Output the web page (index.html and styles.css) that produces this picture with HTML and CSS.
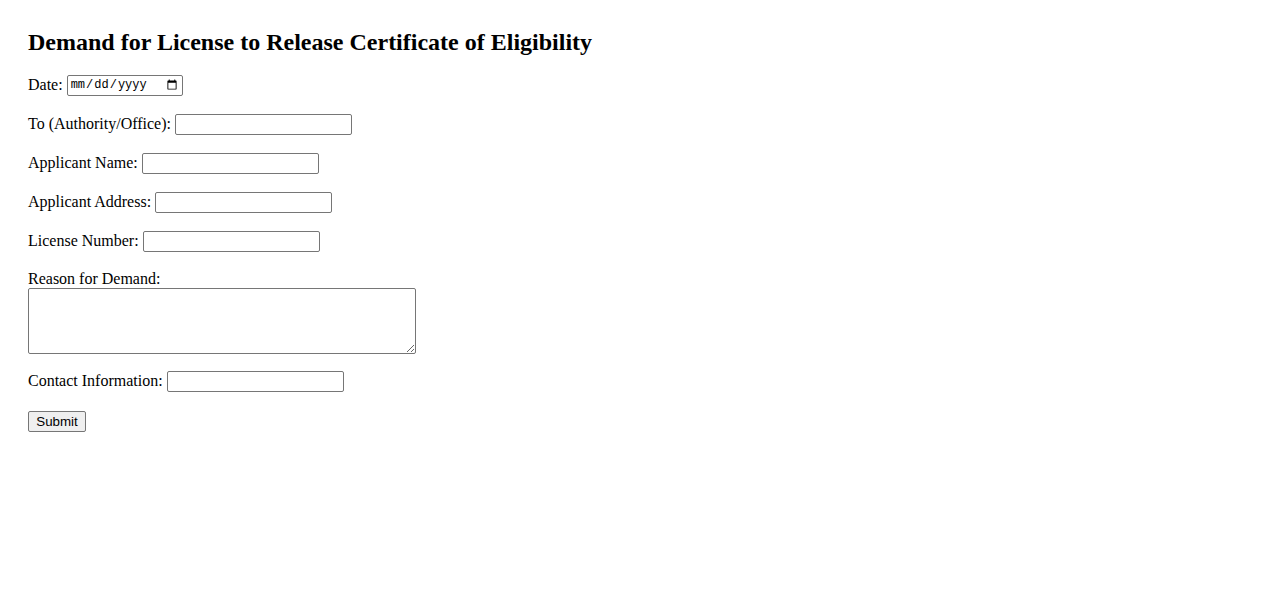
FILE: index.html
```html
<!DOCTYPE html>
<html>
<head>
<meta charset="utf-8">
<title>Demand for License</title>
<link rel="stylesheet" href="styles.css">
</head>
<body>
<div class="page">
  <h2 class="title">Demand for License to Release Certificate of Eligibility</h2>
  <form class="form">
    <p class="row"><label for="date">Date:</label> <input class="date" type="date" id="date"></p>
    <p class="row"><label for="to">To (Authority/Office):</label> <input class="text" type="text" id="to"></p>
    <p class="row"><label for="name">Applicant Name:</label> <input class="text" type="text" id="name"></p>
    <p class="row"><label for="addr">Applicant Address:</label> <input class="text" type="text" id="addr"></p>
    <p class="row"><label for="lic">License Number:</label> <input class="text" type="text" id="lic"></p>
    <p class="row reason"><label for="reason">Reason for Demand:</label><br><textarea class="area" id="reason"></textarea></p>
    <p class="row"><label for="contact">Contact Information:</label> <input class="text" type="text" id="contact"></p>
    <p class="row"><button class="submit" type="submit">Submit</button></p>
  </form>
</div>
</body>
</html>
```
FILE: styles.css
```css
html, body {
  margin: 0;
  padding: 0;
  background: #fff;
}
body {
  font-family: "Liberation Serif", "Times New Roman", serif;
  font-size: 16px;
  color: #000;
}
.page {
  padding: 28px;
}
.title {
  font-size: 24px;
  font-weight: bold;
  margin: 0 0 17px;
  line-height: 28px;
}
.form {
  margin: 0;
}
.row {
  margin: 0 0 16px;
  line-height: 23px;
  height: 23px;
}
.text, .date {
  box-sizing: border-box;
  height: 21px;
  border: 1px solid #767676;
  border-radius: 2px;
  padding: 1px 2px;
  vertical-align: middle;
  position: relative;
  top: -1px;
  font-family: "Liberation Mono", monospace;
  font-size: 13.33px;
}
.text {
  width: 177px;
}
.date {
  width: 116px;
  font-size: 12px;
}
.reason {
  line-height: 18px;
  height: auto;
  padding-top: 2px;
  margin-bottom: 15px;
}
.area {
  box-sizing: border-box;
  width: 388px;
  height: 66px;
  border: 1px solid #767676;
  border-radius: 2px;
  margin: 0;
  vertical-align: bottom;
  font-family: "Liberation Mono", monospace;
}
.submit {
  box-sizing: border-box;
  width: 58px;
  height: 21px;
  padding: 1px 6px;
  vertical-align: middle;
  font-family: "Liberation Sans", Arial, sans-serif;
  font-size: 13.33px;
  background: #efefef;
  border: 1px solid #767676;
  border-radius: 2px;
  color: #000;
}
```
